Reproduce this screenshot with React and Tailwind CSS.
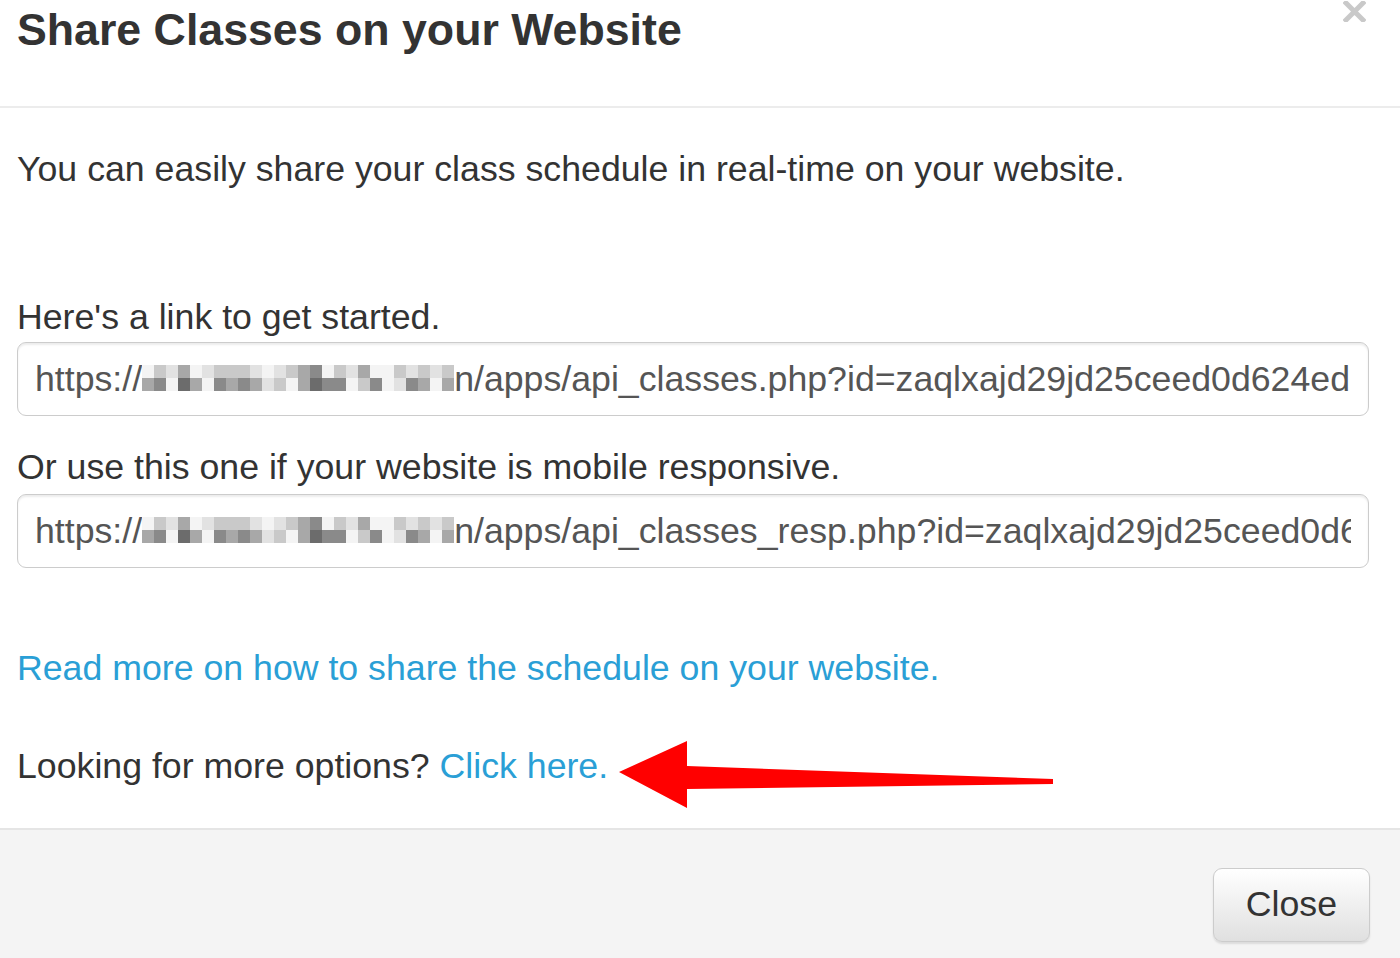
import React from "react";

// blurred part of the url, two rows of grey squares
const shades = [
  "bg-[#f4f4f4]",
  "bg-[#e2e2e2]",
  "bg-[#c9c9c9]",
  "bg-[#a8a8a8]",
  "bg-[#8a8a8a]",
  "bg-[#6c6c6c]",
];
const rowTop = "02130122210123402130021212122";
const rowBottom = "34053043431203544024014303534";

const Pixels = () => (
  <span className="inline-block align-top mt-[11px]" aria-hidden="true">
    {[rowTop, rowBottom].map((row, r) => (
      <span key={r} className="flex">
        {row
          .slice(0, 26)
          .split("")
          .map((c, i) => (
            <span key={i} className={"w-[12px] h-[13px] " + shades[Number(c)]} />
          ))}
      </span>
    ))}
  </span>
);

const UrlBox = ({ rest }) => (
  <div className="h-[74px] border border-[#cccccc] rounded-[9px] px-[17px] flex items-center shadow-[inset_0_2px_2px_rgba(0,0,0,0.075)] bg-white">
    <div className="overflow-hidden whitespace-nowrap text-[#555] w-full">
      https://
      <Pixels />
      {rest}
    </div>
  </div>
);

export default function App() {
  return (
    <div className="w-[1400px] h-[958px] overflow-hidden bg-white text-[#333] font-['Liberation_Sans',Arial,sans-serif]">
      <div className="flex items-start justify-between pl-[17px] pr-[34px] pt-[6px] pb-[52px] border-b-2 border-[#ececec]">
        <h4 className="text-[44.7px] leading-[48px] font-bold">
          Share Classes on your Website
        </h4>
        <button className="-mt-[5px]" aria-label="Close">
          <svg width="23" height="21" viewBox="0 0 23 21">
            <path
              d="M3 2 L20 19 M20 2 L3 19"
              stroke="#c9c9c9"
              strokeWidth="5"
              strokeLinecap="square"
            />
          </svg>
        </button>
      </div>

      <div className="pl-[17px] pr-[31px] pt-[36px] pb-[36px] text-[35.7px] leading-[50.7px]">
        <p className="mb-[97px]">
          You can easily share your class schedule in real-time on your website.
        </p>

        <label className="block">Here's a link to get started.</label>
        <UrlBox rest="n/apps/api_classes.php?id=zaqlxajd29jd25ceed0d624ed" />

        <label className="block mt-[26px] mb-[1px]">
          Or use this one if your website is mobile responsive.
        </label>
        <UrlBox rest="n/apps/api_classes_resp.php?id=zaqlxajd29jd25ceed0d624ed" />

        <p className="mt-[75px]">
          <a href="#" className="text-[#2a9fd6]">
            Read more on how to share the schedule on your website.
          </a>
        </p>

        <p className="mt-[47px] relative">
          Looking for more options?{" "}
          <a href="#" className="text-[#2a9fd6]">
            Click here.
          </a>
          <svg
            className="absolute left-[598px] -top-[4px]"
            width="445"
            height="74"
            viewBox="0 0 445 74"
          >
            <polygon
              points="4,35 72,4 72,29 438,42 438,47 72,52 72,71"
              fill="#ff0000"
            />
          </svg>
        </p>
      </div>

      <div className="border-t-2 border-[#e5e5e5] bg-[#f4f4f4] h-[200px] pt-[38px] pr-[30px] flex justify-end items-start">
        <button className="h-[74px] px-[32px] text-[35.7px] text-[#333] border border-[#cccccc] rounded-[9px] bg-gradient-to-b from-white to-[#e0e0e0] shadow-[0_2px_2px_rgba(0,0,0,0.1)]">
          Close
        </button>
      </div>
    </div>
  );
}
